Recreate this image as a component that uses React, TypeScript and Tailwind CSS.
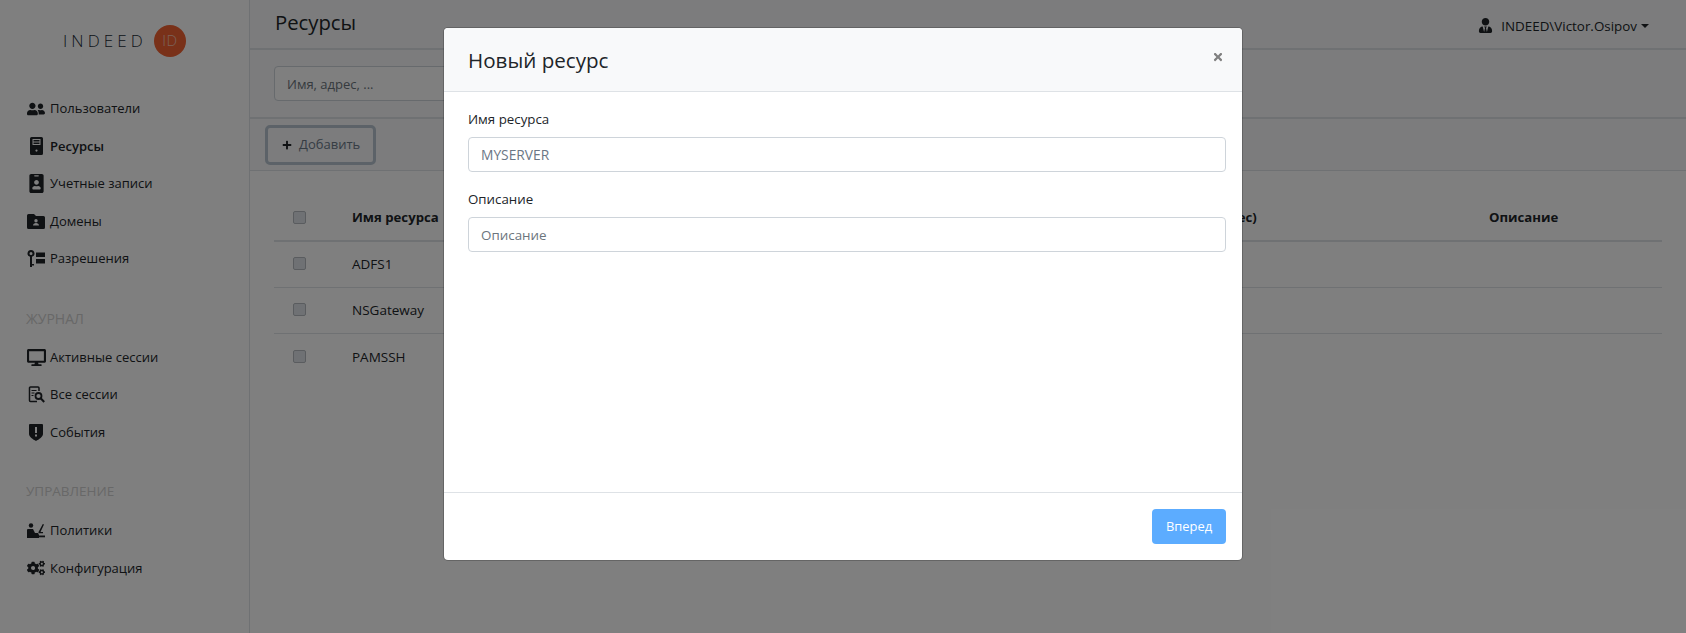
import { FaCogs, FaDesktop, FaIdBadge, FaPlus, FaTimes, FaUserFriends, FaUserTie } from 'react-icons/fa';

const font = "font-['Open_Sans','Noto_Sans',sans-serif]";

function ServerIcon() {
  return (
    <svg width="13" height="18" viewBox="0 0 13 18" fill="currentColor">
      <path fillRule="evenodd" d="M1.500 0h10A1.500 1.500 0 0 1 13 1.500v15a1.500 1.500 0 0 1-1.500 1.500h-10A1.500 1.500 0 0 1 0 16.500v-15A1.500 1.500 0 0 1 1.500 0ZM2.500 2v6h8V2h-8Zm1 1h6v1.500h-6V3Zm0 2.500h6V7h-6V5.500ZM6.500 12.500a1.100 1.100 0 1 0 0 2.200 1.100 1.100 0 0 0 0-2.200Z" />
    </svg>
  );
}

function DomainIcon() {
  return (
    <svg width="18" height="15" viewBox="0 0 18 15" fill="currentColor">
      <path fillRule="evenodd" d="M1.500 0H7l2 2h7.500A1.500 1.500 0 0 1 18 3.500v10a1.500 1.500 0 0 1-1.500 1.500h-15A1.500 1.500 0 0 1 0 13.500v-12A1.500 1.500 0 0 1 1.500 0ZM9 5a1.700 1.700 0 1 0 0 3.400A1.700 1.700 0 0 0 9 5Zm-3 6.500h6c0-1.500-1.300-2.400-3-2.400s-3 .9-3 2.400Z" />
    </svg>
  );
}

function PermissionIcon() {
  return (
    <svg width="18" height="17" viewBox="0 0 18 17" fill="currentColor">
      <path fillRule="evenodd" d="M4 0a3.500 3.500 0 0 1 1 6.850V14h2v1.500H5V17H3V6.850A3.500 3.500 0 0 1 4 0Zm0 2a1.500 1.500 0 1 0 0 3 1.500 1.500 0 0 0 0-3Z" />
      <rect x="9" y="2.500" width="9" height="4.500" />
      <rect x="9" y="9" width="9" height="4.500" />
    </svg>
  );
}

function SessionsIcon() {
  return (
    <svg width="17" height="17" viewBox="0 0 17 17" fill="none" stroke="currentColor">
      <path strokeWidth="1.500" d="M9 15.500H2.500a1 1 0 0 1-1-1V2a1 1 0 0 1 1-1h7.500a1 1 0 0 1 1 1v3" />
      <path strokeWidth="1.200" d="M3.500 4.500h5M3.500 7h3M3.500 9.500h2" />
      <circle cx="10.500" cy="10" r="3" strokeWidth="1.800" />
      <path strokeWidth="2" d="m12.700 12.300 3.500 3.700" />
    </svg>
  );
}

function ShieldIcon() {
  return (
    <svg width="14" height="17" viewBox="0 0 14 17" fill="currentColor">
      <path fillRule="evenodd" d="M1 0h12a1 1 0 0 1 1 1v9c0 2.500-4 5.500-7 7-3-1.500-7-4.500-7-7V1a1 1 0 0 1 1-1Zm5 3v6h2V3H6Zm0 7.500v2h2v-2H6Z" />
    </svg>
  );
}

function PolicyIcon() {
  return (
    <svg width="18" height="15" viewBox="0 0 18 15" fill="currentColor">
      <circle cx="4" cy="2.500" r="2.200" />
      <path d="M1 6h5l2 4h3l1 2v3H0V7a1 1 0 0 1 1-1Z" />
      <path d="M15.800 1 17 1.600 13.500 9H16v1.300h-4.500V9Z" />
      <rect x="12" y="12.500" width="6" height="1.800" />
    </svg>
  );
}

const topNav = [
  { label: 'Пользователи', icon: <FaUserFriends size={18} /> },
  { label: 'Ресурсы', icon: <ServerIcon />, active: true },
  { label: 'Учетные записи', icon: <FaIdBadge size={19} /> },
  { label: 'Домены', icon: <DomainIcon /> },
  { label: 'Разрешения', icon: <PermissionIcon /> },
];
const logNav = [
  { label: 'Активные сессии', icon: <FaDesktop size={19} /> },
  { label: 'Все сессии', icon: <SessionsIcon /> },
  { label: 'События', icon: <ShieldIcon /> },
];
const adminNav = [
  { label: 'Политики', icon: <PolicyIcon /> },
  { label: 'Конфигурация', icon: <FaCogs size={18} /> },
];

function NavList({ items }: { items: { label: string; icon: React.ReactNode; active?: boolean }[] }) {
  return (
    <ul className="flex flex-col">
      {items.map((item) => (
        <li key={item.label} className="flex h-[37.5px] items-center text-[13px] text-[#212529]">
          <span className="flex w-[20px] shrink-0 justify-center text-[#1f2327]">{item.icon}</span>
          <span className={`ml-[4px] ${item.active ? 'font-semibold' : ''}`}>{item.label}</span>
        </li>
      ))}
    </ul>
  );
}

function Check() {
  return <span className="mb-[2px] block size-[13px] rounded-[2px] border border-[#b4b9bf] bg-[#dfe3e8]" />;
}

const rows = ['ADFS1', 'NSGateway', 'PAMSSH'];
const tableCols = 'grid grid-cols-[78px_823px_314px_1fr]';

export default function App() {
  return (
    <div className={`relative flex h-screen overflow-hidden bg-white ${font}`}>
      <aside className="flex w-[250px] shrink-0 flex-col border-r border-[#dee2e6] pl-[26px]">
        <div className="ml-[37px] flex h-[81px] items-center">
          <span className="w-[91px] text-[17px] font-light leading-none tracking-[0.24em] text-[#222b36]">INDEED</span>
          <span className="flex size-[32px] items-center justify-center rounded-full bg-[#f26232] text-[15px] font-light tracking-[0.04em] text-[#f7c4b3]">ID</span>
        </div>
        <div className="mt-[9px]">
          <NavList items={topNav} />
        </div>
        <div className="mt-[29px] flex h-[23px] items-center text-[14px] text-[#d0d0d0]">ЖУРНАЛ</div>
        <div className="mt-[9px]">
          <NavList items={logNav} />
        </div>
        <div className="mt-[29px] flex h-[23px] items-center text-[13.500px] text-[#d0d0d0]">УПРАВЛЕНИЕ</div>
        <div className="mt-[9px]">
          <NavList items={adminNav} />
        </div>
      </aside>

      <main className="flex min-w-0 flex-1 flex-col">
        <header className="flex h-[50px] shrink-0 items-center justify-between border-b-2 border-[#dee2e6] bg-[#f8f9fa] pl-[25px] pr-[37px]">
          <h1 className="mb-[4px] text-[20.300px] font-medium text-[#212529]">Ресурсы</h1>
          <div className="mt-[4px] flex items-center text-[13.400px] text-[#212529]">
            <FaUserTie size={15} className="mr-[8px] text-[#1f2327]" />
            INDEED\Victor.Osipov
            <span className="ml-[4px] size-0 border-x-[4px] border-t-[4px] border-x-transparent border-t-[#212529]" />
          </div>
        </header>
        <div className="flex h-[69px] shrink-0 items-center border-b-2 border-[#dee2e6] bg-[#f8f9fa] pl-[24px]">
          <input
            readOnly
            placeholder="Имя, адрес, ..."
            className="h-[35px] w-[300px] rounded-[4px] border border-[#ced4da] bg-white px-[12px] text-[13px] placeholder:text-[#6c757d]"
          />
        </div>
        <div className="flex h-[52px] shrink-0 items-center border-b border-[#dee2e6] bg-[#f8f9fa] pl-[15px]">
          <button className="flex h-[40px] w-[111px] items-center gap-[7px] rounded-[5px] border-[3px] border-[#b8c4d0] pl-[14px] text-[13px] text-[#6c7a89]">
            <FaPlus size={10} className="text-[#212529]" />
            Добавить
          </button>
        </div>

        <div className="mx-[24px] mt-[25px] text-[13.500px] text-[#212529]">
          <div className={`${tableCols} h-[46px] items-center border-b-2 border-[#dee2e6] text-[13.200px] font-bold`}>
            <span className="pl-[19px]"><Check /></span>
            <span>Имя ресурса</span>
            <span className="whitespace-nowrap">Имя (адрес)</span>
            <span>Описание</span>
          </div>
          {rows.map((name) => (
            <div key={name} className={`${tableCols} h-[46px] items-center border-b border-[#dee2e6] last:border-b-0`}>
              <span className="pl-[19px]"><Check /></span>
              <span>{name}</span>
            </div>
          ))}
        </div>
      </main>

      <div className="absolute inset-0 bg-black/50">
        <div className="mx-auto mt-[27px] flex h-[534px] w-[800px] flex-col overflow-hidden rounded-[5px] border border-black/20 bg-white bg-clip-padding">
          <div className="flex h-[64px] shrink-0 items-center justify-between border-b border-[#dee2e6] bg-[#f8f9fa] pl-[24px] pr-[18px]">
            <h2 className="mt-[1px] text-[20.600px] font-medium text-[#212529]">Новый ресурс</h2>
            <FaTimes size={12} className="mb-[6px] text-[#808080]" />
          </div>
          <div className="flex flex-1 flex-col pl-[24px] pr-[16px] pt-[17px] text-[13.300px] text-[#212529]">
            <label className="mb-[7px] block leading-[21px]">Имя ресурса</label>
            <input
              readOnly
              value="MYSERVER"
              className="h-[35px] w-full rounded-[4px] border border-[#ced4da] px-[12px] text-[13.800px] text-[#6b7785]"
            />
            <label className="mb-[7px] mt-[17px] block leading-[21px]">Описание</label>
            <input
              readOnly
              placeholder="Описание"
              className="h-[35px] w-full rounded-[4px] border border-[#ced4da] px-[12px] text-[13.400px] placeholder:text-[#6c757d]"
            />
          </div>
          <div className="flex h-[68px] shrink-0 items-center justify-end border-t border-[#dee2e6] px-[16px]">
            <button className="h-[35px] w-[74px] rounded-[4px] bg-[#5cacff] text-[12.900px] text-white">Вперед</button>
          </div>
        </div>
      </div>
    </div>
  );
}
